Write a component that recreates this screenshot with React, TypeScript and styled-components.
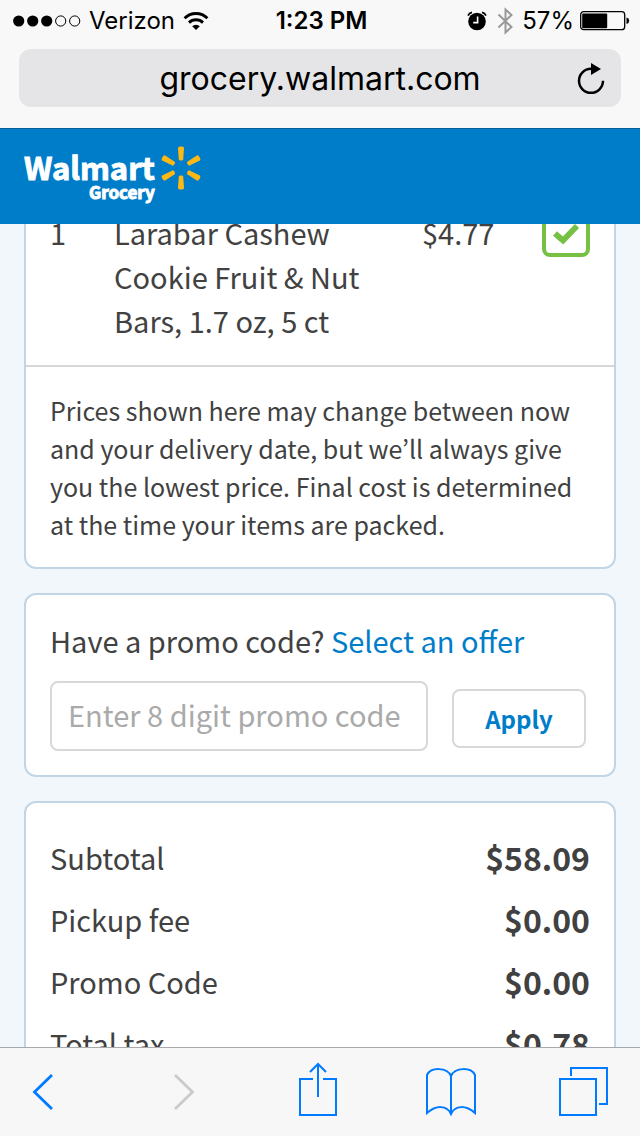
import React from "react";
import styled, { createGlobalStyle } from "styled-components";

const systemFont = `Inter, "Liberation Sans", sans-serif`;
const pageFont = `"Noto Sans CJK KR", "Noto Sans", sans-serif`;

const GlobalStyle = createGlobalStyle`
  *, *::before, *::after { box-sizing: border-box; }
  body { margin: 0; background: #f2f7fc; }
  button, input { font: inherit; color: inherit; margin: 0; padding: 0; }
  button { background: none; border: 0; cursor: pointer; }
  svg { display: block; flex: none; }
`;

const Screen = styled.div`
  display: flex;
  flex-direction: column;
  height: 100vh;
  overflow: hidden;
  color: #414141;
  font-family: ${pageFont};
`;

const BrowserTop = styled.header`
  flex: none;
  padding-bottom: 21px;
  background: #f8f8f8;
  color: #000;
  font-family: ${systemFont};
`;

const StatusBar = styled.div`
  display: grid;
  grid-template-columns: 1fr auto 1fr;
  align-items: center;
  height: 41px;
  margin-bottom: 8px;
  padding: 0 10px 0 13px;
  font-size: 24px;
  line-height: 32px;
`;

const StatusGroup = styled.div<{ $end?: boolean }>`
  display: flex;
  align-items: center;
  justify-content: ${(p) => (p.$end ? "flex-end" : "flex-start")};
  gap: ${(p) => (p.$end ? 6 : 8)}px;
`;

const Clock = styled.time`
  font-weight: 600;
`;

const AddressBar = styled.div`
  display: grid;
  grid-template-columns: 60px 1fr 60px;
  align-items: center;
  height: 58px;
  margin: 0 19px;
  border-radius: 12px;
  background: #e5e5e7;
`;

const Address = styled.span`
  grid-column: 2;
  text-align: center;
  font-size: 32px;
  line-height: 40px;
`;

const IconButton = styled.button`
  display: flex;
  align-items: center;
  justify-content: center;
  height: 60px;
  width: 60px;
`;

const SiteHeader = styled.div`
  display: flex;
  flex: none;
  align-items: flex-start;
  height: 96px;
  padding: 16px 24px;
  border-top: 1px solid #005e98;
  background: #007dc9;
`;

const Logo = styled.a`
  display: flex;
  gap: 6px;
  color: #fff;
  text-decoration: none;
  font-weight: 700;
  -webkit-text-stroke: 1px #fff;
`;

const Wordmark = styled.span`
  display: flex;
  flex-direction: column;
  align-items: flex-end;
  padding-top: 5px;
`;

const BrandName = styled.span`
  font-size: 31px;
  line-height: 34px;
`;

const BrandSection = styled.span`
  font-size: 17px;
  line-height: 16px;
`;

const Viewport = styled.main`
  flex: 1;
  min-height: 0;
  overflow: hidden;
`;

const Cards = styled.div`
  display: flex;
  flex-direction: column;
  gap: 24px;
  margin: -40px 24px 0;
`;

const Card = styled.section`
  border: 2px solid #c2d5e5;
  border-radius: 12px;
  background: #fff;
`;

const Items = styled.ul`
  margin: 0;
  padding: 0;
  list-style: none;
`;

const Item = styled.li`
  display: grid;
  grid-template-columns: 64px 1fr 120px 48px;
  align-items: start;
  padding: 24px 24px 23px;
  border-bottom: 2px solid #d8d8d8;
  font-size: 29px;
  line-height: 44px;
`;

const ItemName = styled.span`
  max-width: 260px;
`;

const CheckLabel = styled.label`
  display: grid;
  width: 48px;
  height: 48px;
  margin-top: -1px;

  > * {
    grid-area: 1 / 1;
  }
`;

const CheckInput = styled.input`
  appearance: none;
  width: 48px;
  height: 48px;
  border: 4px solid #76c043;
  border-radius: 8px;
  background: #fff;
`;

const Note = styled.p`
  margin: 0;
  padding: 24px;
  font-size: 25px;
  line-height: 38px;
`;

const PromoCard = styled(Card)`
  padding: 25px 24px 24px;
`;

const PromoTitle = styled.p`
  margin: 0 0 21px;
  font-size: 29px;
  line-height: 40px;
`;

const OfferLink = styled.a`
  color: #007dc9;
  text-decoration: none;
`;

const PromoForm = styled.form`
  display: flex;
  align-items: center;
  gap: 24px;
  padding-right: 4px;
`;

const PromoInput = styled.input`
  flex: 1;
  min-width: 0;
  height: 70px;
  padding: 0 16px 4px;
  border: 2px solid #d8d8d8;
  border-radius: 8px;
  background: #fff;
  font-size: 29px;

  &::placeholder {
    color: #aaa;
    opacity: 1;
  }
`;

const ApplyButton = styled.button`
  width: 134px;
  height: 59px;
  margin-top: 5px;
  border: 2px solid #d8d8d8;
  border-radius: 8px;
  color: #007dc9;
  font-size: 24px;
  font-weight: 700;
`;

const Totals = styled.dl`
  margin: 0;
  padding: 23px 24px;
`;

const TotalRow = styled.div`
  display: flex;
  justify-content: space-between;
  font-size: 29px;
  line-height: 62px;
`;

const Amount = styled.dd`
  margin: 0;
  font-size: 32px;
  font-weight: 700;
`;

const Toolbar = styled.nav`
  display: flex;
  flex: none;
  align-items: center;
  justify-content: space-between;
  height: 89px;
  padding: 0 26px 0 13px;
  border-top: 1px solid #a9a9ab;
  background: #f7f7f7;
`;

const SignalDots = () => (
  <svg width="68" height="12" viewBox="0 0 68 12" aria-hidden="true">
    {[0, 1, 2, 3, 4].map((i) => (
      <circle
        key={i}
        cx={5.7 + i * 14}
        cy="6"
        r={i < 3 ? 5.6 : 5.1}
        fill={i < 3 ? "#000" : "none"}
        stroke={i < 3 ? "none" : "#000"}
      />
    ))}
  </svg>
);

const WifiIcon = () => (
  <svg width="26" height="20" viewBox="0 0 26 20" fill="none" stroke="#000" strokeWidth="2.9" aria-hidden="true">
    <path d="M1.6 7.2a16 16 0 0 1 22.8 0" />
    <path d="M6 11.6a10 10 0 0 1 14 0" />
    <path d="M9.2 15.2a5.4 5.4 0 0 1 7.6 0L13 19z" fill="#000" stroke="none" />
  </svg>
);

const AlarmIcon = () => (
  <svg width="24" height="20" viewBox="0 0 24 20" aria-hidden="true">
    <circle cx="10" cy="10.5" r="8.8" fill="#000" />
    <path d="M1 4.6Q2 2 5 1.4M19 4.6Q18 2 15 1.4" fill="none" stroke="#000" strokeWidth="1.6" />
    <path d="M10.6 5.4v6.2H6.2" fill="none" stroke="#fff" strokeWidth="1.6" />
  </svg>
);

const BluetoothIcon = () => (
  <svg width="19" height="28" viewBox="0 0 19 28" fill="none" stroke="#999" strokeWidth="2" aria-hidden="true">
    <path d="M1.5 7.5 14.5 20 8.5 25.5V2.5L14.5 8 1.5 20.5" />
  </svg>
);

const BatteryIcon = () => (
  <svg width="50" height="20" viewBox="0 0 50 20" aria-hidden="true">
    <rect x="0.7" y="0.7" width="44" height="18" rx="3" fill="none" stroke="#000" strokeWidth="1.3" />
    <rect x="2.2" y="2.4" width="25" height="14.8" rx="1" fill="#000" />
    <path d="M46.5 6.5q2.7.6 2.7 3.3t-2.7 3.3z" fill="#000" />
  </svg>
);

const ReloadIcon = () => (
  <svg width="30" height="32" viewBox="0 1 30 32" aria-hidden="true">
    <path d="M27 18.8A12 12 0 1 1 15 6.8" fill="none" stroke="#000" strokeWidth="2.5" />
    <path d="M15 1 25 7 15 13z" fill="#000" />
  </svg>
);

const SparkIcon = () => (
  <svg width="40" height="46" viewBox="-20 -23 40 46" fill="#fdb813" aria-hidden="true">
    {[0, 60, 120, 180, 240, 300].map((angle) => (
      <path
        key={angle}
        transform={`rotate(${angle})`}
        d="M-3-20C-3-22 3-22 3-20L2.2-8.6C2.1-7.2-2.1-7.2-2.2-8.6z"
      />
    ))}
  </svg>
);

const CheckMark = () => (
  <svg width="48" height="48" viewBox="0 0 48 48" pointerEvents="none" aria-hidden="true">
    <path d="M13 24.5 21 31.5 35 17" fill="none" stroke="#76c043" strokeWidth="5.8" />
  </svg>
);

const ToolIcon = ({ color = "#007aff", width = 2, d }: { color?: string; width?: number; d: string }) => (
  <svg width="60" height="60" viewBox="0 1 60 60" fill="none" stroke={color} strokeWidth={width} aria-hidden="true">
    <path d={d} />
  </svg>
);

const tools = [
  { label: "Back", d: "M39 14 21.5 31 39 48", width: 2.8 },
  { label: "Forward", d: "M27 14 44.5 31 27 48", width: 2.8, color: "#cacaca" },
  { label: "Share", d: "M29 18H16V54H52V18H39M34 36V4M26 11 34 3 42 11" },
  {
    label: "Bookmarks",
    d: "M32 52V15C28 6 12 6 8 14V52C17 44 28 44 32 53C36 44 47 44 56 52V14C52 6 36 6 32 15",
  },
  { label: "Tabs", d: "M6 18H42V54H6zM17 15V7H53V43H45" },
];

const totals = [
  ["Subtotal", "$58.09"],
  ["Pickup fee", "$0.00"],
  ["Promo Code", "$0.00"],
  ["Total tax", "$0.78"],
];

export default function App() {
  return (
    <Screen>
      <GlobalStyle />
      <BrowserTop>
        <StatusBar>
          <StatusGroup>
            <SignalDots />
            <span>Verizon</span>
            <WifiIcon />
          </StatusGroup>
          <Clock>1:23 PM</Clock>
          <StatusGroup $end>
            <AlarmIcon />
            <BluetoothIcon />
            <span>57%</span>
            <BatteryIcon />
          </StatusGroup>
        </StatusBar>
        <AddressBar>
          <Address>grocery.walmart.com</Address>
          <IconButton type="button" aria-label="Reload">
            <ReloadIcon />
          </IconButton>
        </AddressBar>
      </BrowserTop>
      <SiteHeader>
        <Logo href="#home">
          <Wordmark>
            <BrandName>Walmart</BrandName>
            <BrandSection>Grocery</BrandSection>
          </Wordmark>
          <SparkIcon />
        </Logo>
      </SiteHeader>
      <Viewport>
        <Cards>
          <Card>
            <Items>
              <Item>
                <span>1</span>
                <ItemName>Larabar Cashew Cookie Fruit &amp; Nut Bars, 1.7 oz, 5 ct</ItemName>
                <span>$4.77</span>
                <CheckLabel>
                  <CheckInput type="checkbox" defaultChecked aria-label="Allow substitution" />
                  <CheckMark />
                </CheckLabel>
              </Item>
            </Items>
            <Note>
              Prices shown here may change between now and your delivery date, but we’ll always give you the lowest
              price. Final cost is determined at the time your items are packed.
            </Note>
          </Card>
          <PromoCard>
            <PromoTitle>
              Have a promo code? <OfferLink href="#offers">Select an offer</OfferLink>
            </PromoTitle>
            <PromoForm onSubmit={(e) => e.preventDefault()}>
              <PromoInput type="text" placeholder="Enter 8 digit promo code" aria-label="Promo code" />
              <ApplyButton type="submit">Apply</ApplyButton>
            </PromoForm>
          </PromoCard>
          <Card>
            <Totals>
              {totals.map(([label, amount]) => (
                <TotalRow key={label}>
                  <dt>{label}</dt>
                  <Amount>{amount}</Amount>
                </TotalRow>
              ))}
            </Totals>
          </Card>
        </Cards>
      </Viewport>
      <Toolbar aria-label="Browser">
        {tools.map(({ label, ...icon }) => (
          <IconButton key={label} type="button" aria-label={label} disabled={label === "Forward"}>
            <ToolIcon {...icon} />
          </IconButton>
        ))}
      </Toolbar>
    </Screen>
  );
}
